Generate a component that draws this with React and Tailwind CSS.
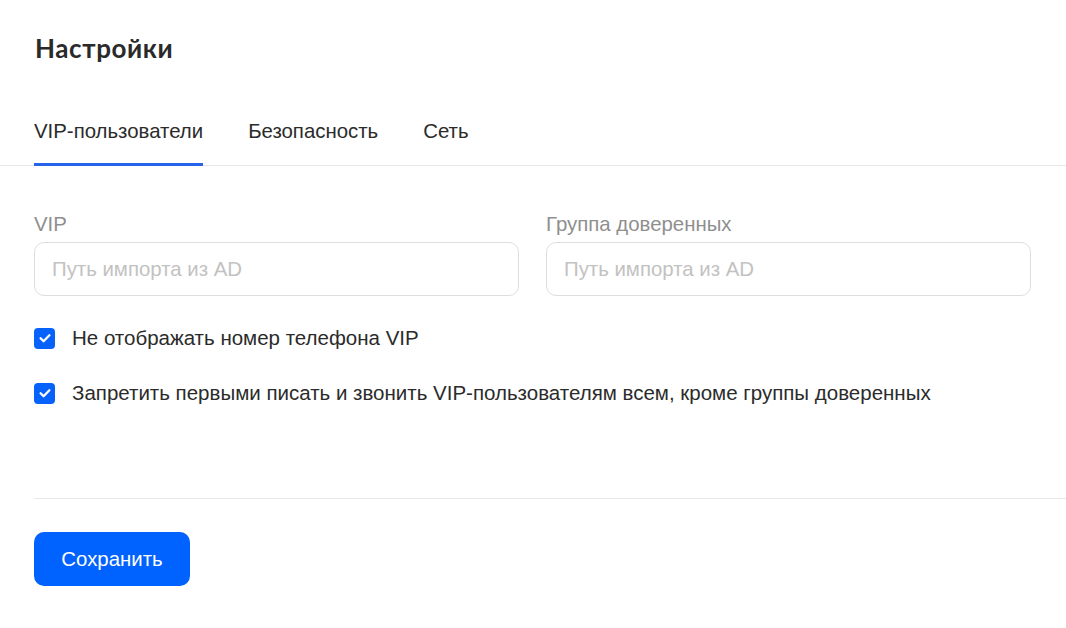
import { useState } from "react";

function Checkbox({ checked, onChange, label }) {
  return (
    <label className="flex cursor-pointer items-center gap-[17px] leading-[24px]">
      <span
        onClick={onChange}
        className={
          "flex h-[21px] w-[21px] shrink-0 items-center justify-center rounded-[4px] " +
          (checked ? "bg-[#0662fb]" : "border border-[#cfcfcf] bg-white")
        }
      >
        {checked && (
          <svg width="14" height="14" viewBox="0 0 14 14" fill="none">
            <path d="M2.6 7.2l3 3 5.8-5.9" stroke="white" strokeWidth="2.3" strokeLinecap="round" strokeLinejoin="round" />
          </svg>
        )}
      </span>
      <span className="text-[20.5px] text-[#2b2b2b]">{label}</span>
    </label>
  );
}

export default function App() {
  const [tab, setTab] = useState(0);
  const [hidePhone, setHidePhone] = useState(true);
  const [restrict, setRestrict] = useState(true);
  const tabs = ["VIP-пользователи", "Безопасность", "Сеть"];

  return (
    <div className="min-h-screen w-full bg-white font-['Liberation_Sans',Arial,sans-serif] text-[#2b2b2b]">
      <div className="px-[35px] pt-[32px]">
        <h1 className="font-['Lato',sans-serif] text-[26px] font-bold leading-[32px] tracking-[0.6px] text-[#2a2a2a]">
          Настройки
        </h1>
      </div>

      <div className="mt-[55px] flex gap-[45px] border-b border-[#e8e8e8] px-[34px]">
        {tabs.map((t, i) => (
          <button
            key={t}
            type="button"
            onClick={() => setTab(i)}
            className={
              "-mb-px pb-[20px] text-[20.4px] leading-[24px] text-[#2b2b2b] " +
              (tab === i ? "border-b-[3px] border-[#2563eb]" : "border-b-[3px] border-transparent")
            }
          >
            {t}
          </button>
        ))}
      </div>

      <div className="pl-[34px] pr-[35px] pt-[46px]">
        <div className="grid grid-cols-2 gap-[27px]">
          <div>
            <div className="mb-[6px] text-[20.4px] leading-[24px] text-[#8f8f8f]">VIP</div>
            <input
              placeholder="Путь импорта из AD"
              className="h-[54px] w-full rounded-[10px] border border-[#dedede] px-[17px] text-[20.4px] outline-none placeholder:text-[#c2c2c2]"
            />
          </div>
          <div>
            <div className="mb-[6px] text-[20.4px] leading-[24px] text-[#8f8f8f]">Группа доверенных</div>
            <input
              placeholder="Путь импорта из AD"
              className="h-[54px] w-full rounded-[10px] border border-[#dedede] px-[17px] text-[20.4px] outline-none placeholder:text-[#c2c2c2]"
            />
          </div>
        </div>

        <div className="mt-[30px] flex flex-col gap-[31px]">
          <Checkbox checked={hidePhone} onChange={() => setHidePhone(!hidePhone)} label="Не отображать номер телефона VIP" />
          <Checkbox
            checked={restrict}
            onChange={() => setRestrict(!restrict)}
            label="Запретить первыми писать и звонить VIP-пользователям всем, кроме группы доверенных"
          />
        </div>
      </div>

      <div className="ml-[34px] mt-[93px] border-t border-[#e8e8e8]" />

      <div className="px-[34px] pt-[33px]">
        <button
          type="button"
          className="h-[54px] w-[156px] rounded-[10px] bg-[#0062ff] text-[20.4px] text-white"
        >
          Сохранить
        </button>
      </div>
    </div>
  );
}
